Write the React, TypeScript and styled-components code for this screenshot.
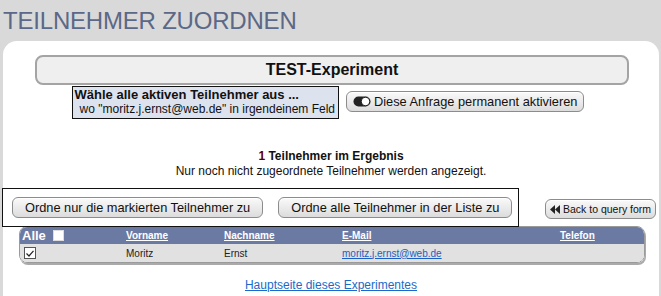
import React from 'react';
import styled, { createGlobalStyle } from 'styled-components';

const GlobalStyle = createGlobalStyle`
  html, body {
    margin: 0;
    padding: 0;
    background: #d9d9d9;
    font-family: "Liberation Sans", Arial, sans-serif;
    overflow: hidden;
  }
`;

const Page = styled.div`
  width: 661px;
  height: 296px;
  overflow: hidden;
`;

const Heading = styled.h1`
  margin: 0;
  padding: 7px 0 0 3px;
  height: 34px;
  font-size: 24px;
  font-weight: normal;
  color: #5b6887;
  letter-spacing: -0.2px;
`;

const Panel = styled.div`
  margin: 0 2px 0 3px;
  background: #fff;
  border-radius: 14px 14px 0 0;
  padding-top: 14px;
  height: 300px;
`;

const ExperimentBox = styled.div`
  margin: 0 30px 0 32px;
  height: 26px;
  border: 2px solid #a4a4a4;
  border-radius: 8px;
  background: #efefef;
  font-size: 16px;
  font-weight: bold;
  text-align: center;
  line-height: 26px;
  color: #111;
`;

const QueryRow = styled.div`
  display: flex;
  justify-content: center;
  align-items: flex-start;
  gap: 7px;
  margin: 1px 0 0 -6px;
`;

const QueryBox = styled.div`
  background: #dde3ee;
  border: 1px solid #111;
  padding: 1px 3px 2px 2px;
  font-size: 12px;
  line-height: 14px;
  color: #111;
`;

const QueryTitle = styled.div`
  font-weight: bold;
  font-size: 13px;
`;

const QueryLine = styled.div`
  padding-left: 5px;
`;

const Button = styled.button<{ $small?: boolean }>`
  display: inline-flex;
  align-items: center;
  gap: 3px;
  height: ${p => (p.$small ? '20px' : '21px')};
  padding: ${p => (p.$small ? '0 4px' : '0 12px')};
  font-family: "Liberation Sans", Arial, sans-serif;
  font-size: ${p => (p.$small ? '10.5px' : '12.8px')};
  color: #111;
  background: linear-gradient(#fafafa, #dcdcdc);
  border: 1px solid #8c8c8c;
  border-radius: 6px;
  box-shadow: inset 0 1px 0 #fff;
  cursor: pointer;
  white-space: nowrap;
`;

const ToggleButton = styled(Button)`
  margin-top: 5px;
  padding: 0 6px;
`;

const ResultInfo = styled.div`
  margin-top: 30px;
  text-align: center;
  font-size: 12px;
  line-height: 15px;
  color: #111;
`;

const Count = styled.span`
  color: #5a0000;
`;

const ActionRow = styled.div`
  display: flex;
  align-items: center;
  margin-top: 9px;
`;

const ActionBox = styled.div`
  display: flex;
  gap: 15px;
  align-items: center;
  margin-left: -1px;
  width: 497px;
  height: 37px;
  padding: 0 9px;
  border: 1px solid #111;
`;

const BackWrap = styled.div`
  margin: 3px 0 0 26px;
`;

const Grid = styled.div`
  margin: -1px 14px 0 16px;
  border-radius: 8px;
  overflow: hidden;
  border: 1px solid #9a9a9a;
  box-shadow: 1px 2px 0 #aaa;
`;

const Table = styled.table`
  width: 100%;
  border-collapse: collapse;
  font-size: 10px;
`;

const HeadRow = styled.tr`
  background: #6b7aa3;
  height: 17px;
`;

const HeadCell = styled.th<{ $w?: number }>`
  text-align: left;
  color: #fff;
  font-weight: bold;
  padding: 0;
  width: ${p => (p.$w ? `${p.$w}px` : 'auto')};
  vertical-align: middle;
`;

const HeadLink = styled.span`
  text-decoration: underline;
`;

const AllLabel = styled.span`
  display: inline-flex;
  align-items: center;
  gap: 7px;
  font-size: 13px;
  padding-left: 2px;
`;

const WhiteBox = styled.span`
  display: inline-block;
  width: 9px;
  height: 9px;
  background: #fff;
  border: 1px solid #ddd;
`;

const BodyRow = styled.tr`
  background: #e1e1e1;
  height: 18px;
`;

const Cell = styled.td`
  padding: 0;
  color: #222;
  vertical-align: middle;
`;

const CheckBox = styled.span`
  display: inline-flex;
  align-items: center;
  justify-content: center;
  width: 10px;
  height: 10px;
  margin-left: 4px;
  border: 1px solid #555;
  background: #fff;
`;

const MailLink = styled.a`
  color: #1a5fc4;
  text-decoration: underline;
`;

const Footer = styled.div`
  margin-top: 12px;
  text-align: center;
`;

const FooterLink = styled.a`
  color: #1a6ac9;
  font-size: 12px;
  text-decoration: underline;
`;

function ToggleIcon() {
  return (
    <svg width="18" height="11" viewBox="0 0 18 11">
      <rect x="0.5" y="0.5" width="17" height="10" rx="5" fill="#222" />
      <circle cx="12.5" cy="5.5" r="4.2" fill="#fff" stroke="#222" strokeWidth="1" />
    </svg>
  );
}

function BackIcon() {
  return (
    <svg width="10" height="9" viewBox="0 0 10 9">
      <polygon points="5,0 5,9 0,4.5" fill="#222" />
      <polygon points="10,0 10,9 5,4.5" fill="#222" />
    </svg>
  );
}

export default function App() {
  return (
    <Page>
      <GlobalStyle />
      <Heading>TEILNEHMER ZUORDNEN</Heading>
      <Panel>
        <ExperimentBox>TEST-Experiment</ExperimentBox>
        <QueryRow>
          <QueryBox>
            <QueryTitle>Wähle alle aktiven Teilnehmer aus ...</QueryTitle>
            <QueryLine>wo "moritz.j.ernst@web.de" in irgendeinem Feld</QueryLine>
          </QueryBox>
          <ToggleButton>
            <ToggleIcon />
            Diese Anfrage permanent aktivieren
          </ToggleButton>
        </QueryRow>
        <ResultInfo>
          <b><Count>1</Count> Teilnehmer im Ergebnis</b>
          <div>Nur noch nicht zugeordnete Teilnehmer werden angezeigt.</div>
        </ResultInfo>
        <ActionRow>
          <ActionBox>
            <Button>Ordne nur die markierten Teilnehmer zu</Button>
            <Button>Ordne alle Teilnehmer in der Liste zu</Button>
          </ActionBox>
          <BackWrap>
            <Button $small>
              <BackIcon />
              Back to query form
            </Button>
          </BackWrap>
        </ActionRow>
        <Grid>
          <Table>
            <thead>
              <HeadRow>
                <HeadCell $w={106}>
                  <AllLabel>Alle <WhiteBox /></AllLabel>
                </HeadCell>
                <HeadCell $w={98}><HeadLink>Vorname</HeadLink></HeadCell>
                <HeadCell $w={118}><HeadLink>Nachname</HeadLink></HeadCell>
                <HeadCell $w={218}><HeadLink>E-Mail</HeadLink></HeadCell>
                <HeadCell><HeadLink>Telefon</HeadLink></HeadCell>
              </HeadRow>
            </thead>
            <tbody>
              <BodyRow>
                <Cell>
                  <CheckBox>
                    <svg width="8" height="7" viewBox="0 0 8 7">
                      <polyline points="0.5,3.5 3,6 7.5,0.8" fill="none" stroke="#222" strokeWidth="1.2" />
                    </svg>
                  </CheckBox>
                </Cell>
                <Cell>Moritz</Cell>
                <Cell>Ernst</Cell>
                <Cell><MailLink href="#">moritz.j.ernst@web.de</MailLink></Cell>
                <Cell />
              </BodyRow>
            </tbody>
          </Table>
        </Grid>
        <Footer>
          <FooterLink href="#">Hauptseite dieses Experimentes</FooterLink>
        </Footer>
      </Panel>
    </Page>
  );
}
